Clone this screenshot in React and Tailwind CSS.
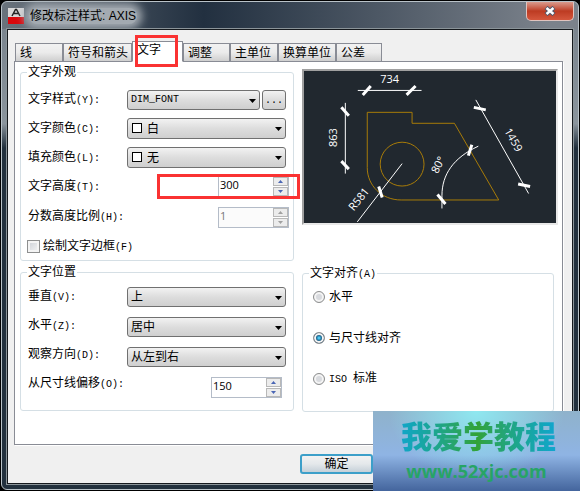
import { useState } from 'react';

const control = 'rounded-[3px] border border-[#707070] bg-linear-to-b from-[#f2f2f2] from-0% via-[#dddddd] via-50% to-[#cfcfcf]';

const TABS = [
  { name: '线', width: 'w-12' },
  { name: '符号和箭头', width: 'w-[69px]' },
  { name: '文字', width: 'w-[51px]' },
  { name: '调整', width: 'w-[47px]' },
  { name: '主单位', width: 'w-12' },
  { name: '换算单位', width: 'w-[58px]' },
  { name: '公差', width: 'w-[46px]' },
];

function Mono({ children }) {
  return <span className="font-['Liberation_Mono',monospace] text-[10px]">{children}</span>;
}

function Label({ id, text, hotkey }) {
  return (
    <label htmlFor={id} className="w-[99px] shrink-0 whitespace-nowrap">
      {text}<Mono>({hotkey}):</Mono>
    </label>
  );
}

function Select({ id, options, swatch, mono }) {
  return (
    <div className="relative min-w-0 flex-1">
      <select
        id={id}
        className={`block w-full appearance-none ${control} ${swatch ? 'h-[21px] pl-[19px]' : 'h-5 pl-[3px]'} ${mono ? "font-['Liberation_Mono',monospace] text-[10px]" : 'text-[12px]'}`}
      >
        {options.map(o => <option key={o}>{o}</option>)}
      </select>
      {swatch && <span className="pointer-events-none absolute left-[5px] top-[5px] size-[10px] border border-black bg-white" />}
      <svg viewBox="0 0 7 4" className="pointer-events-none absolute right-1 top-[9px] h-1 w-[7px]">
        <path d="M0 0h7L3.5 4z" fill="#000" />
      </svg>
    </div>
  );
}

function Spinner({ id, initial, disabled }) {
  const [value, setValue] = useState(initial);
  const step = d => setValue(v => String(Number(v) + d));
  const button = 'flex flex-1 w-[15px] items-center justify-center border border-[#b8b8b8] bg-[#ececec]';
  const arrow = disabled ? '#a0a0a0' : '#4a66b5';

  return (
    <div className="flex h-[21px] w-[71px] border border-[#b4bcc8] bg-white">
      <input
        id={id}
        value={value}
        disabled={disabled}
        onChange={e => setValue(e.target.value)}
        className={`min-w-0 flex-1 pl-px pb-[3px] font-['Open_Sans',sans-serif] text-[11px] outline-none ${disabled ? 'bg-[#fbfbfb] text-[#777]' : 'text-black'}`}
      />
      <div className="flex flex-col gap-px">
        <button type="button" aria-label="增加" disabled={disabled} onClick={() => step(1)} className={button}>
          <svg viewBox="0 0 5 3" className="h-[3px] w-[5px]"><path d="M0 3h5L2.5 0z" fill={arrow} /></svg>
        </button>
        <button type="button" aria-label="减少" disabled={disabled} onClick={() => step(-1)} className={button}>
          <svg viewBox="0 0 5 3" className="h-[3px] w-[5px]"><path d="M0 0h5L2.5 3z" fill={arrow} /></svg>
        </button>
      </div>
    </div>
  );
}

function Group({ title, className, children }) {
  return (
    <fieldset className={`min-w-0 rounded-[3px] border border-[#d5dfe5] pl-[7px] ${className}`}>
      <legend className="-ml-px h-4 px-px leading-4">{title}</legend>
      {children}
    </fieldset>
  );
}

function Preview() {
  return (
    <div className="border-2 border-t-[#a0a0a0] border-l-[#a0a0a0] border-r-[#e8e8e8] border-b-[#e8e8e8] bg-[#21282f]">
      <svg viewBox="0 0 253 153" className="block w-full overflow-visible" fill="none" strokeWidth="1">
        {/* Part outline */}
        <g stroke="#a87c08">
          <path d="M63.5 97V41.5H108.5V52.5H151L195.5 129.5H97.5C78 129.5 63.5 115 63.5 97Z" />
          <circle cx="98.5" cy="93.5" r="22" />
        </g>
        {/* Dimension lines */}
        <g stroke="#fff">
          <path d="M54 19.5H118M41.5 32V103M98.5 93L53.5 151.5M172.5 29L225.5 123" />
          <path d="M138.5 138V125C138.5 104 150 87 175 75.5" />
        </g>
        {/* Tick marks */}
        <path
          d="M59 24L67 15M103 24L112 15M37.5 36.5L45 45M37.5 90.5L45 98.5M75 116L78.5 127M134 124L142 133.5M165 85L168.5 74M170.5 36.5L182.5 39M215 113.5L227 116"
          stroke="#fff" strokeWidth="3"
        />
        <g fill="#fff" className="font-['Open_Sans',sans-serif] text-[11px]" textAnchor="middle">
          <text x="86" y="12">734</text>
          <text transform="translate(33 67) rotate(-90)">863</text>
          <text transform="translate(58 131) rotate(-51)">R581</text>
          <text transform="translate(138 96) rotate(-62)">80°</text>
          <text transform="translate(207 71) rotate(60)">1459</text>
        </g>
      </svg>
    </div>
  );
}

function TextTab() {
  const [align, setAlign] = useState('line');
  const row = 'flex h-[29px] items-center';

  return (
    <div className="grid grid-cols-[274fr_256fr] items-start gap-x-2 pt-[2px] pr-1 pl-[5px]">
      <div className="flex flex-col gap-[3px]">
        <Group title="文字外观" className="pr-1 pt-[5px]">
          <div className={`${row} pr-[3px]`}>
            <Label id="style" text="文字样式" hotkey="Y" />
            <Select id="style" options={['DIM_FONT', 'Standard']} mono />
            <button type="button" className={`ml-[2px] h-5 w-6 ${control}`}><Mono>...</Mono></button>
          </div>
          <div className={`${row} pr-[3px]`}>
            <Label id="color" text="文字颜色" hotkey="C" />
            <Select id="color" options={['白', '红', '黄']} swatch />
          </div>
          <div className={`${row} pr-[3px]`}>
            <Label id="fill" text="填充颜色" hotkey="L" />
            <Select id="fill" options={['无', '背景']} swatch />
          </div>
          <div className={`${row} justify-between`}>
            <Label id="height" text="文字高度" hotkey="T" />
            <div className="relative">
              <Spinner id="height" initial="300" />
              <span className="pointer-events-none absolute -inset-y-[2px] -left-[61px] -right-[11px] border-3 border-[#fa3232]" />
            </div>
          </div>
          <div className="flex h-8 items-center justify-between">
            <Label id="fraction" text="分数高度比例" hotkey="H" />
            <Spinner id="fraction" initial="1" disabled />
          </div>
          <label className="-ml-px flex h-[27px] items-center gap-[3px]">
            <input type="checkbox" className="size-[13px] appearance-none border border-[#8e8f8f] bg-linear-to-br from-[#cbcfd5] to-[#f6f6f6] shadow-[inset_0_0_0_2px_#f4f4f4] checked:bg-[#2c628b]" />
            <span>绘制文字边框<Mono>(F)</Mono></span>
          </label>
        </Group>

        <Group title="文字位置" className="pr-[7px] pt-[2px] pb-2">
          <div className="flex">
            <div className="flex flex-col">
              <div className={row}><Label id="vertical" text="垂直" hotkey="V" /></div>
              <div className={row}><Label id="horizontal" text="水平" hotkey="Z" /></div>
              <div className={row}><Label id="direction" text="观察方向" hotkey="D" /></div>
              <div className={row}><Label id="offset" text="从尺寸线偏移" hotkey="O" /></div>
            </div>
            <div className="flex min-w-0 flex-1 flex-col">
              <div className="flex h-[30px] items-center"><Select id="vertical" options={['上', '居中', '外部', '下']} /></div>
              <div className="flex h-[30px] items-center"><Select id="horizontal" options={['居中', '第一条尺寸界线']} /></div>
              <div className="flex h-[30px] items-center"><Select id="direction" options={['从左到右', '从右到左']} /></div>
              <div className="flex h-[30px] items-center justify-end pr-1"><Spinner id="offset" initial="150" /></div>
            </div>
          </div>
        </Group>
      </div>

      <div className="flex flex-col gap-10 pt-[5px]">
        <Preview />
        <Group title={<>文字对齐<Mono>(A)</Mono></>} className="mr-1 pt-2 pb-[24px]">
          <div className="flex flex-col gap-[25px] pl-[3px]">
            {[['flat', '水平'], ['line', '与尺寸线对齐'], ['iso', '标准']].map(([id, text]) => (
              <label key={id} className="flex h-4 items-center gap-1">
                <input
                  type="radio"
                  name="align"
                  checked={align === id}
                  onChange={() => setAlign(id)}
                  className="size-3 appearance-none rounded-full border border-[#8e8f8f] bg-[#d8dade] shadow-[inset_0_0_0_2px_#f4f4f4] checked:bg-radial checked:from-[#4cc6f0] checked:from-10% checked:to-[#0b3f66] checked:to-50%"
                />
                <span>{id === 'iso' && <Mono>ISO </Mono>}{text}</span>
              </label>
            ))}
          </div>
        </Group>
      </div>
    </div>
  );
}

export default function App() {
  const [active, setActive] = useState('文字');

  return (
    <div className="relative flex min-h-screen flex-col overflow-hidden bg-black font-['Liberation_Sans','Noto_Sans_CJK_SC',sans-serif] text-[12px] leading-4 text-black">
      <div className="mx-px mt-px mb-px flex flex-1 flex-col rounded-md border border-[#b9c2c8] bg-linear-to-b from-[#76808a] from-0% via-[#8a949c] via-25% to-[#22303d] to-30% px-[5px] pb-[5px]">
        {/* Title bar */}
        <header className="-mx-[5px] flex h-[27px] items-center rounded-t-md bg-linear-to-r from-[#6a737c] from-0% via-[#223040] via-35% to-[#7b828b] to-95% pl-[6px]">
          <div className="flex min-w-0 flex-1 items-center gap-[5px]">
            <svg viewBox="0 0 16 16" className="size-4 shrink-0">
              <path d="M0 0h16v9H0z" fill="#d8d8d8" />
              <path d="M0 9h16v7H0z" fill="#d9080c" />
              <path d="M4 8L7.500 1.500h1L12 8M5.500 5.500h5" fill="none" stroke="#222" strokeWidth="1.500" />
            </svg>
            <h1 className="rounded-full bg-[#a3aab1] px-px shadow-[0_0_8px_5px_#a3aab1]">修改标注样式: AXIS</h1>
          </div>
          <button type="button" aria-label="关闭" className="mr-1 flex h-[19px] w-12 items-center justify-center self-start rounded-b-[5px] border border-t-0 border-[#e0c4bf] bg-linear-to-b from-[#d99a8d] from-0% via-[#bd3b22] via-50% to-[#d4573d]">
            <svg viewBox="0 0 12 10" className="h-[10px] w-3">
              <path d="M2 1.500L10 8.500M10 1.500L2 8.500" stroke="#50566a" strokeWidth="4.500" />
              <path d="M2.500 2L9.500 8M9.500 2L2.500 8" stroke="#fff" strokeWidth="2.500" />
            </svg>
          </button>
        </header>

        {/* Client area */}
        <main className="flex flex-1 flex-col border border-[#15191d] bg-[#f0f0f0] pr-[9px] pl-[6px] pt-[11px] outline outline-[#8b9499]">
          <div role="tablist" className="relative z-10 -mb-px flex items-end pl-px">
            {TABS.map(t => (
              <button
                key={t.name}
                type="button"
                role="tab"
                aria-selected={active === t.name}
                onClick={() => setActive(t.name)}
                className={`relative whitespace-nowrap border border-[#898c95] pl-1 text-left ${t.width} ${
                  active === t.name
                    ? 'h-[21px] border-b-white bg-white pb-[3px]'
                    : 'h-[19px] bg-linear-to-b from-[#f2f2f2] via-[#ebebeb] to-[#cfcfcf]'
                }`}
              >
                {t.name}
                {t.name === '文字' && <span className="pointer-events-none absolute -top-[7px] left-[2px] h-8 w-[43px] border-3 border-[#fa3232]" />}
              </button>
            ))}
          </div>
          <div className="min-h-[384px] border border-[#898c95] bg-white shadow-[1px_1px_0_#fff]">
            <TextTab />
          </div>
          <footer className="flex justify-end py-[9px] pr-[190px]">
            <button type="button" className="h-5 w-[73px] rounded-[3px] border-2 border-[#3c9fc9] bg-linear-to-b from-[#f2f2f2] via-[#e4e8eb] to-[#c5d0d8] leading-4 outline-none">确定</button>
          </footer>
        </main>
      </div>

      {/* Site badge */}
      <div className="absolute right-0 bottom-0 z-20 flex h-20 w-[207px] flex-col items-center bg-linear-to-b from-[#8fb2cb] from-0% via-[#8fb4e4] via-55% to-[#44659d] to-100% pt-px">
        <div className="absolute inset-0 bg-radial-[ellipse_at_50%_0%] from-[#8fe8f0] from-0% to-transparent to-60%" />
        <strong className="relative bg-linear-to-r from-[#12a5cf] via-[#32a236] to-[#12a5cf] bg-clip-text pl-1 font-['Noto_Sans_CJK_SC',sans-serif] text-[31px] leading-[46px] font-black text-transparent">我爱学教程</strong>
        <a href="#" className="relative font-['Open_Sans',sans-serif] text-[18px] leading-[26px] font-bold text-[#27a466]">www.52xjc.com</a>
      </div>
    </div>
  );
}
